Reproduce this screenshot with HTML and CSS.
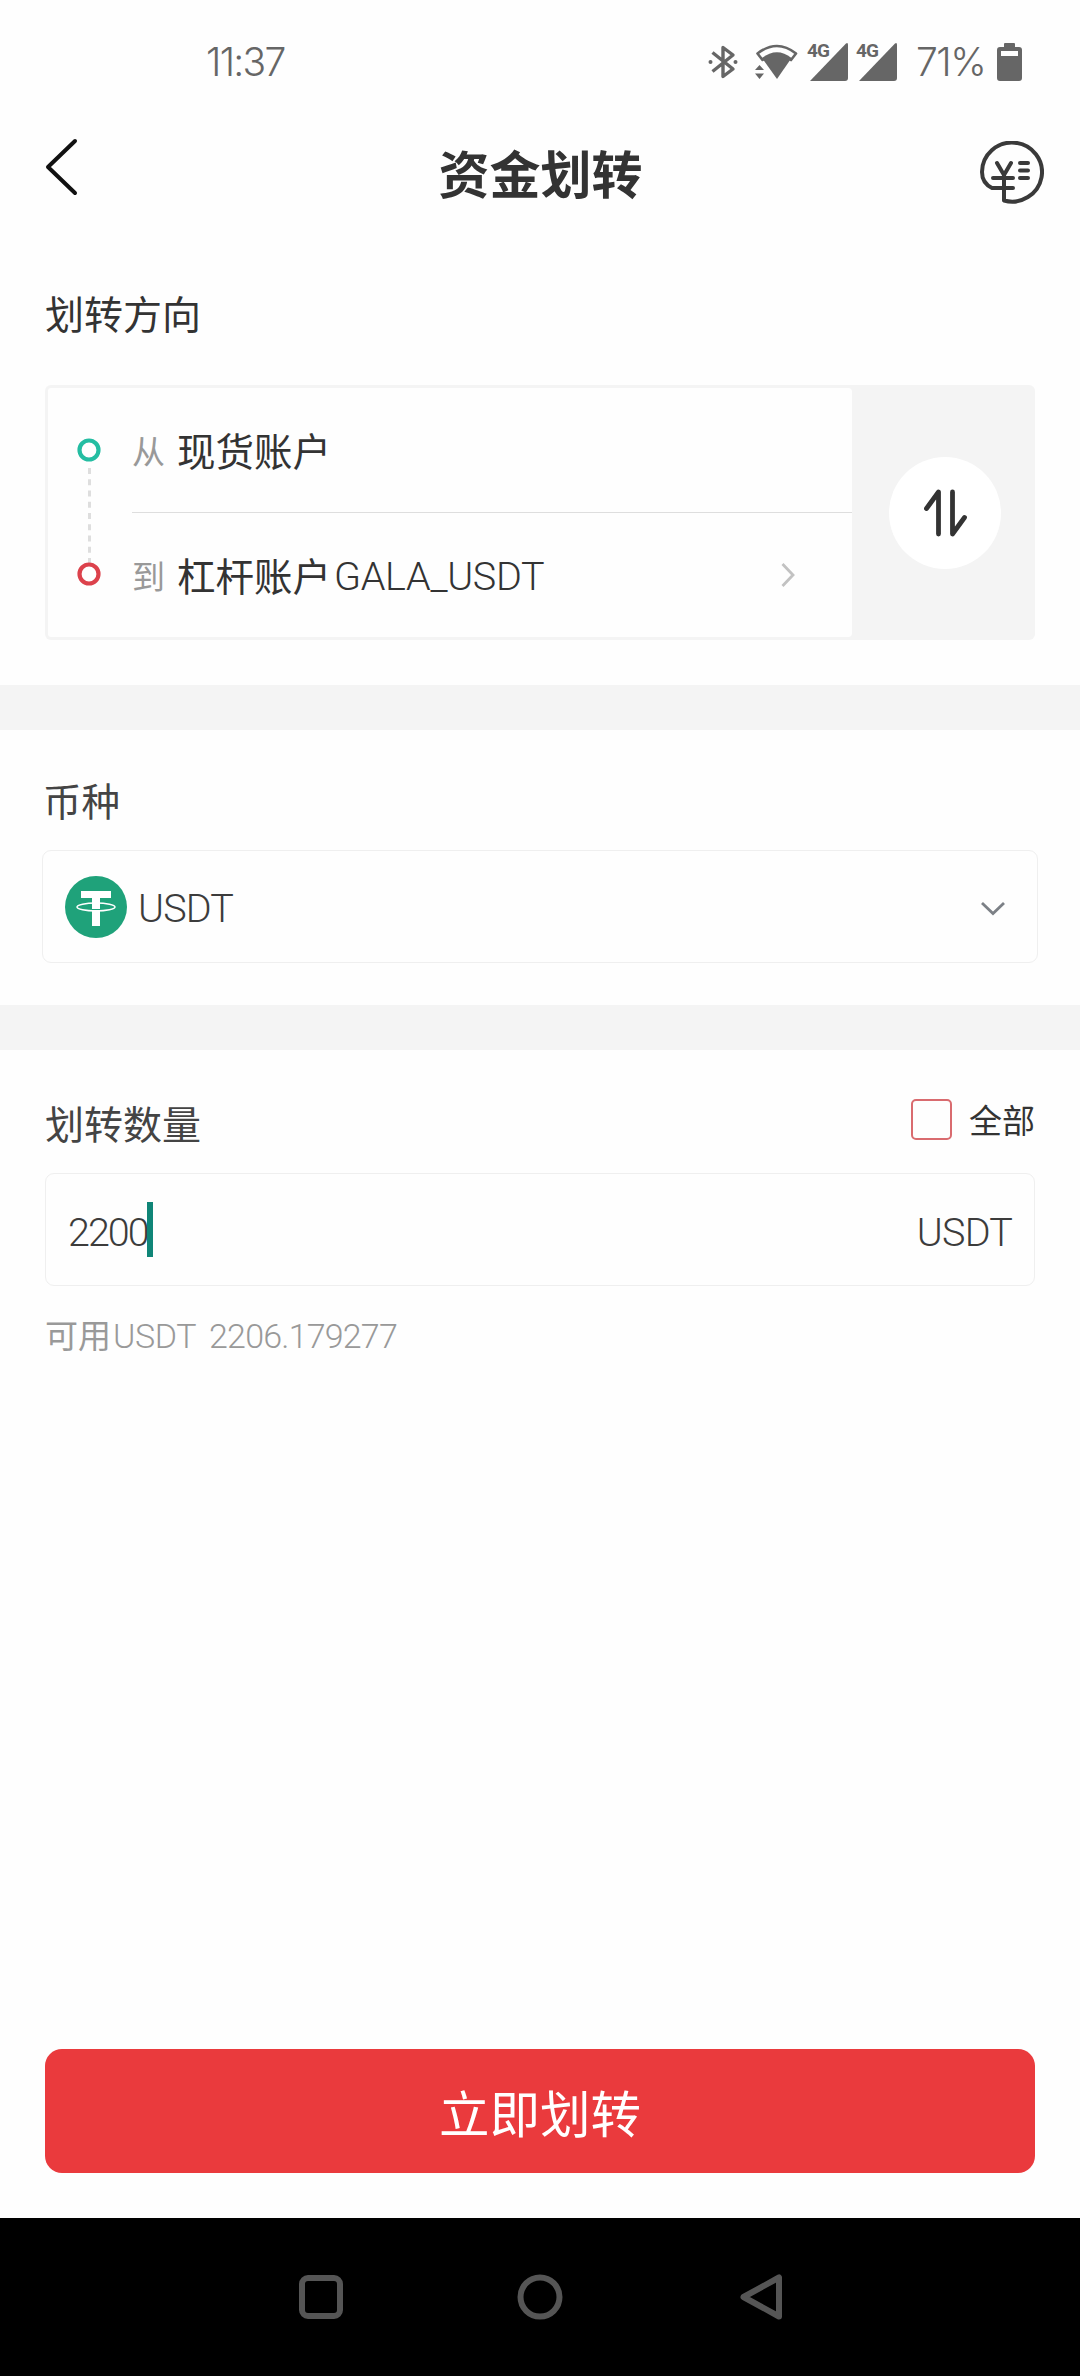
FILE: index.html
```html
<!DOCTYPE html>
<html lang="zh-CN">
<head>
<meta charset="utf-8">
<title>资金划转</title>
<link rel="stylesheet" href="styles.css">
</head>
<body>
<div class="screen">
  <header class="status">
    <span class="clock">11:37</span>
    <div class="status-icons">
      <svg class="bt" width="30" height="36" viewBox="0 0 30 36" fill="none" stroke="#666" stroke-width="3.4"><path d="M4.500 8.500L25 25L15 32.500V3.500L25 11L4.500 27.500" stroke-linejoin="round"/><circle cx="2.500" cy="18" r="2" fill="#666" stroke="none"/><circle cx="27.500" cy="18" r="2" fill="#666" stroke="none"/></svg>
      <svg class="wifi" width="43" height="36" viewBox="0 0 43 36"><path d="M2.500 9.500Q22 -5.500 41 9.500L36 16Q22 5 7.500 16Z" fill="none" stroke="#666" stroke-width="2.600" stroke-linejoin="round"/><path d="M7 14Q22 2.500 36.500 14L22 35Z" fill="#666"/><path d="M0 26L4.500 21L9 26ZM0 29.500L4.500 35L9 29.500Z" fill="#666"/></svg>
      <span class="signal"><svg width="38" height="38" viewBox="0 0 38 38"><path d="M0 38L36 0.500Q38 -1 38 2V35Q38 38 35 38Z" fill="#666"/></svg><b>4G</b></span>
      <span class="signal"><svg width="38" height="38" viewBox="0 0 38 38"><path d="M0 38L36 0.500Q38 -1 38 2V35Q38 38 35 38Z" fill="#666"/></svg><b>4G</b></span>
      <span class="percent">71%</span>
      <svg class="battery" width="25" height="38" viewBox="0 0 25 38"><path d="M8 0H17Q18 0 18 1V4H22Q25 4 25 7V35Q25 38 22 38H3Q0 38 0 35V7Q0 4 3 4H7V1Q7 0 8 0ZM4 8V13H21V8Z" fill="#666" fill-rule="evenodd"/></svg>
    </div>
  </header>

  <nav class="titlebar">
    <svg class="back" width="34" height="58" viewBox="0 0 34 58" fill="none" stroke="#111" stroke-width="4" stroke-linecap="round" stroke-linejoin="round"><path d="M30 3L3 29L30 55"/></svg>
    <h1>资金划转</h1>
    <svg class="coupon" width="64" height="64" viewBox="0 0 64 64" fill="none" stroke="#3a3a3a" stroke-width="4" stroke-linecap="round" stroke-linejoin="round"><path d="M33 47H12Q2 42 2 31A30 29.500 0 1 1 24 59.500V34M13 37H33M17 22L24 34L31 22M40 22H48M40 29.500H48M40 37H48"/></svg>
  </nav>

  <section class="direction">
    <h2>划转方向</h2>
    <div class="card">
      <svg class="route" width="26" height="150" viewBox="0 0 26 150" fill="none"><path d="M13.500 31V127" stroke="#dedede" stroke-width="3" stroke-dasharray="6 5.250"/><circle cx="13" cy="13" r="9.500" stroke="#24bda2" stroke-width="4.200"/><circle cx="13" cy="137" r="9.500" fill="#fff" stroke="#dc424c" stroke-width="4.200"/></svg>
      <div class="accounts">
        <div class="account from"><span class="role">从</span><span class="name">现货账户</span></div>
        <div class="account to"><span class="role">到</span><span class="name">杠杆账户</span><span class="pair">GALA_USDT</span><svg class="next" width="14" height="26" viewBox="0 0 14 26" fill="none" stroke="#c2c2c2" stroke-width="2.800"><path d="M1.500 2L12 13L1.500 24"/></svg></div>
      </div>
      <div class="swap"><span class="swap-button"><svg width="46" height="50" viewBox="0 0 46 50" fill="none" stroke="#333" stroke-width="4.800" stroke-linecap="round" stroke-linejoin="round"><path d="M4.500 20.500L16.500 4V46M30.500 4V46L42.500 29.500"/></svg></span></div>
    </div>
  </section>

  <section class="coin">
    <h2>币种</h2>
    <div class="select">
      <svg width="62" height="62" viewBox="0 0 62 62"><circle cx="31" cy="31" r="31" fill="#1fa27a"/><path d="M16 15H46V22H35V50H27V22H16Z" fill="#fff"/><path d="M26 30.500H36" stroke="#1fa27a" stroke-width="2.500"/><ellipse cx="31" cy="31" rx="19" ry="4" fill="none" stroke="#fff" stroke-width="1.500"/><path d="M27 32V26H35V32Z" fill="#fff"/><path d="M27 33.500H35" stroke="#1fa27a" stroke-width="1"/></svg>
      <span class="latin">USDT</span>
      <svg class="down" width="24" height="15" viewBox="0 0 24 15" fill="none" stroke="#7c8086" stroke-width="2.800"><path d="M1 2L12 12.500L23 2"/></svg>
    </div>
  </section>

  <section class="amount">
    <div class="amount-head"><h2>划转数量</h2><label class="all"><i class="box"></i>全部</label></div>
    <div class="field"><span class="latin value">2200</span><i class="caret"></i><span class="latin unit">USDT</span></div>
    <p class="available"><span class="cn">可用</span><span class="sym">USDT</span><span class="num">2206.179277</span></p>
  </section>

  <button class="submit">立即划转</button>

  <footer class="system-nav">
    <svg width="46" height="46" viewBox="0 0 46 46"><rect x="5" y="4" width="38" height="38" rx="6" fill="none" stroke="#555" stroke-width="6"/></svg>
    <svg width="46" height="46" viewBox="0 0 46 46"><circle cx="23" cy="23" r="19.500" fill="none" stroke="#555" stroke-width="6"/></svg>
    <svg width="46" height="46" viewBox="0 0 46 46"><path d="M42 3.500V42.500L6.500 23Z" fill="none" stroke="#555" stroke-width="6" stroke-linejoin="round"/></svg>
  </footer>
</div>
</body>
</html>
```

FILE: styles.css
```css
* { box-sizing: border-box; }
body { margin: 0; background: #fefefe; font-family: "Noto Sans CJK SC", sans-serif; color: #333; }
svg { display: block; flex: none; }
h1, h2, p { margin: 0; font-weight: 400; }
i, b { font-style: normal; }
.screen { width: 1080px; height: 2376px; display: flex; flex-direction: column; }

.status { height: 110px; padding: 0 58px 0 206px; display: flex; justify-content: space-between; font: 300 39px/44px Inter, sans-serif; color: #666; }
.clock { padding-top: 40px; letter-spacing: -1.7px; }
.status-icons { display: flex; align-items: flex-start; }
.bt { margin-top: 44px; }
.wifi { margin: 44px 0 0 17px; }
.signal { position: relative; margin: 43px 0 0 11px; }
.wifi + .signal { margin-left: 12px; }
.signal b { position: absolute; left: -3px; top: 0; font: 700 19px/15px Roboto, sans-serif; letter-spacing: -1px; }
.percent { width: 71px; margin: 40px 0 0 19px; letter-spacing: -1.5px; white-space: nowrap; }
.battery { margin: 43px 0 0 10px; }

.titlebar { height: 140px; padding: 0 36px 0 45px; display: flex; justify-content: space-between; align-items: flex-start; }
.back { margin: 28px 22px 0 0; }
.titlebar h1 { margin-top: 25px; font-size: 51px; line-height: 74px; font-weight: 700; }
.coupon { margin-top: 31px; }

h2 { font-size: 39px; line-height: 56px; }
.direction { height: 435px; padding: 34px 45px 0; }
.card { height: 255px; margin-top: 45px; border: 3px solid #f4f4f4; border-right: 0; border-radius: 6px; display: flex; overflow: hidden; background: #f4f4f4; }
.route { width: 84px; height: 249px; padding: 49px 30px 50px 28px; background: #fefefe; }
.accounts { flex: 1; background: #fefefe; border-radius: 0 4px 4px 0; }
.account { height: 124px; display: flex; align-items: flex-start; line-height: 56px; padding-top: 33px; }
.account.from { height: 125px; border-bottom: 1px solid #dedede; }
.role { width: 45px; margin-top: 1px; font-size: 33px; color: #999; }
.name { font-size: 38.5px; }
.pair { margin: 3px 0 0 3px; font: 350 39.5px/56px Roboto, sans-serif; letter-spacing: -0.3px; }
.next { margin: 16px 57px 0 auto; }
.swap { width: 183px; display: flex; align-items: center; justify-content: center; }
.swap-button { width: 112px; height: 112px; border-radius: 50%; background: #fff; display: flex; align-items: center; justify-content: center; margin-left: 3px; }

.coin { height: 365px; border-top: 45px solid #f4f4f4; border-bottom: 45px solid #f4f4f4; padding: 41px 42px 0; }
.coin h2 { padding-left: 1px; font-size: 38.5px; color: #444; }
.select { height: 113px; margin-top: 23px; padding: 0 32px 0 22px; border: 1px solid #efefef; border-radius: 9px; display: flex; align-items: center; }
.latin { font: 350 39.5px/56px Roboto, sans-serif; letter-spacing: -0.8px; color: #3c3c3c; }
.select .latin { margin: 5px auto 0 11px; }
.down { margin-top: 3px; }

.amount { flex: 1; padding: 44px 45px 0; }
.amount h2 { color: #444; }
.amount-head { display: flex; justify-content: space-between; height: 79px; }
.all { display: flex; align-items: center; height: 50px; font-size: 33px; line-height: 48px; }
.box { width: 41px; height: 41px; margin: 1px 17px 0 0; border: 2px solid #d96b6f; border-radius: 5px; }
.field { height: 113px; padding: 0 22px; border: 1px solid #efefef; border-radius: 9px; display: flex; align-items: center; }
.value { width: 79px; letter-spacing: -2px; margin-top: 6px; }
.caret { width: 6px; height: 55px; background: #0f8577; }
.unit { margin: 6px 0 0 auto; }
.available { display: flex; align-items: baseline; margin-top: 24px; line-height: 48px; color: #999; }
.cn { font-size: 33px; }
.sym, .num { font: 350 34px/48px Roboto, sans-serif; color: #999; }
.sym { margin-left: 2px; letter-spacing: -0.4px; }
.num { margin-left: 13px; letter-spacing: -0.8px; }

.submit { height: 124px; margin: 0 45px 45px; padding: 0; border: 0; border-radius: 17px; background: #ea3a3d; color: #fff; font: 400 50.5px/124px "Noto Sans CJK SC", sans-serif; }
.system-nav { height: 158px; background: #000; display: flex; justify-content: center; align-items: center; gap: 174px; }
```
